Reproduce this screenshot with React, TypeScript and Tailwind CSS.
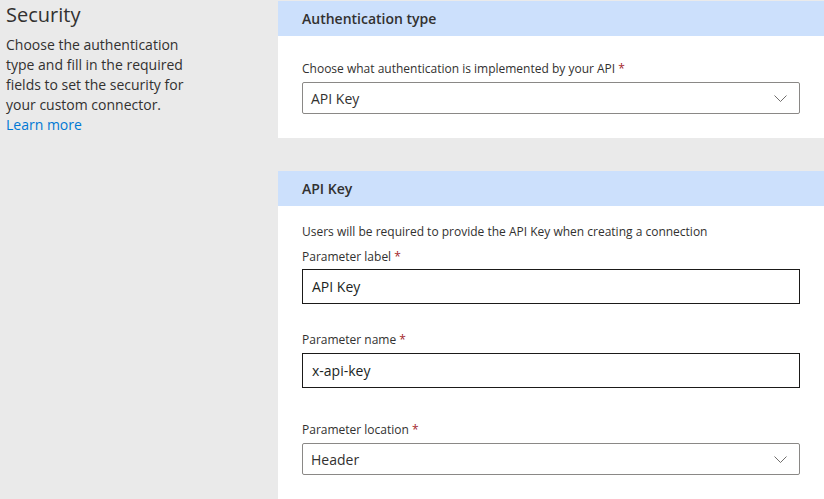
import React from 'react';

const font = { fontFamily: '"Segoe UI", "Open Sans", "Noto Sans", sans-serif' };

const Chevron: React.FC = () => (
  <svg width="13" height="7" viewBox="0 0 13 7" fill="none">
    <path d="M0.5 0.5l6 6 6-6" stroke="#605e5c" strokeWidth="0.9" />
  </svg>
);

const Label: React.FC<{ text: string }> = ({ text }) => (
  <div className="text-[12px] leading-4 text-[#323130]">
    {text} <span className="text-[#a4262c]">*</span>
  </div>
);

const Select: React.FC<{ value: string }> = ({ value }) => (
  <div className="flex h-8 items-center justify-between rounded-[2px] border border-[#8a8886] bg-white pl-2 pr-3">
    <span className="text-[14px] text-[#323130]">{value}</span>
    <Chevron />
  </div>
);

const TextInput: React.FC<{ value: string }> = ({ value }) => (
  <div className="flex h-[35px] items-center border border-[#1b1a19] bg-white px-[9px]">
    <span className="text-[14px] text-[#201f1e]">{value}</span>
  </div>
);

const CardHeader: React.FC<{ title: string }> = ({ title }) => (
  <div className="flex h-[35px] items-center bg-[#cce0fc] px-6 text-[14px] font-semibold text-[#323130]">
    {title}
  </div>
);

export default function App() {
  return (
    <div className="flex h-[499px] w-[824px] overflow-hidden bg-[#eaeaea]" style={font}>
      <div className="w-[278px] shrink-0 px-[6px]">
        <h2 className="mt-[1px] text-[20px] leading-7 text-[#323130]">Security</h2>
        <p className="mt-[6px] w-[190px] text-[14px] leading-5 text-[#323130]">
          Choose the authentication type and fill in the required fields to set the security for your custom connector.
        </p>
        <a className="block text-[14px] leading-5 text-[#0078d4]">Learn more</a>
      </div>
      <div className="flex flex-1 flex-col pt-[1px]">
        <div className="bg-white">
          <CardHeader title="Authentication type" />
          <div className="px-6 pb-6 pt-[25px]">
            <Label text="Choose what authentication is implemented by your API" />
            <div className="mt-[5px]">
              <Select value="API Key" />
            </div>
          </div>
        </div>
        <div className="mt-[33px] flex-1 bg-white">
          <CardHeader title="API Key" />
          <div className="px-6 pt-[18px]">
            <div className="text-[12px] leading-4 text-[#323130]">
              Users will be required to provide the API Key when creating a connection
            </div>
            <div className="mt-[9px]">
              <Label text="Parameter label" />
            </div>
            <div className="mt-[4px]">
              <TextInput value="API Key" />
            </div>
            <div className="mt-[28px]">
              <Label text="Parameter name" />
            </div>
            <div className="mt-[5px]">
              <TextInput value="x-api-key" />
            </div>
            <div className="mt-[34px]">
              <Label text="Parameter location" />
            </div>
            <div className="mt-[5px]">
              <Select value="Header" />
            </div>
          </div>
        </div>
      </div>
    </div>
  );
}
